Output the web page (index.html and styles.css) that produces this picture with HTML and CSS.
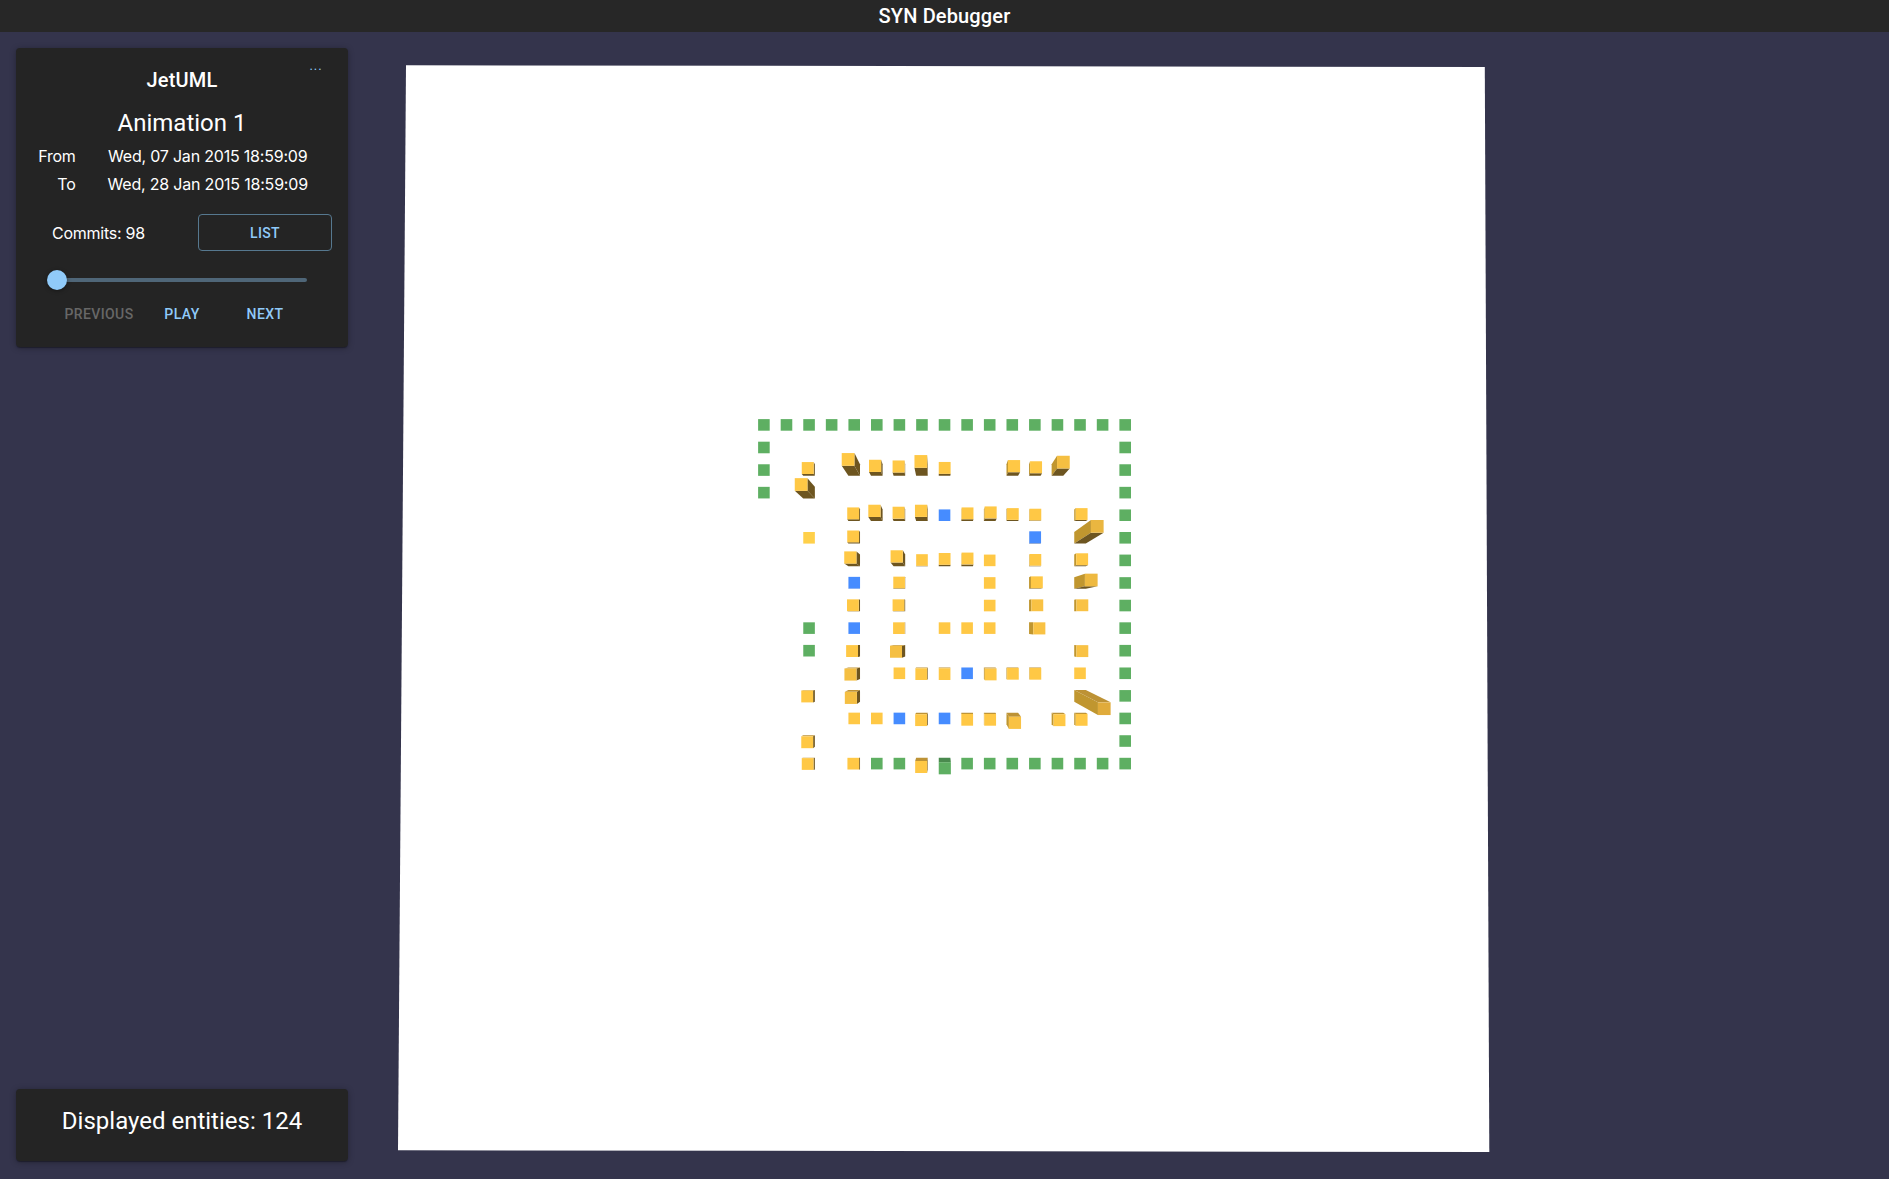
FILE: index.html
```html
<!DOCTYPE html>
<html lang="en">
<head>
<meta charset="utf-8">
<title>SYN Debugger</title>
<link rel="stylesheet" href="styles.css">
</head>
<body>
<header class="app-bar"><h1 class="app-title">SYN Debugger</h1></header>
<main class="viewport">
  <svg class="scene" id="scene" viewBox="0 32 1889 1147" aria-label="Entity map">
    <polygon class="floor" points="406,65.3 1484.8,67 1489.3,1152 398,1150.3"/>
  </svg>
  <aside class="sidebar">
    <section class="card controls">
      <div class="card-head">
        <h2 class="project">JetUML</h2>
        <button class="more" aria-label="More">...</button>
      </div>
      <h3 class="animation">Animation 1</h3>
      <dl class="range">
        <dt>From</dt><dd><span class="date">Wed, 07 Jan 2015 18:59:09</span></dd>
        <dt>To</dt><dd><span class="date">Wed, 28 Jan 2015 18:59:09</span></dd>
      </dl>
      <div class="commits">
        <span class="commit-count">Commits: 98</span>
        <button class="list">LIST</button>
      </div>
      <div class="slider"><span class="thumb"></span></div>
      <div class="playback">
        <button class="text-button" disabled>PREVIOUS</button>
        <button class="text-button">PLAY</button>
        <button class="text-button">NEXT</button>
      </div>
    </section>
    <section class="card summary">Displayed entities: 124</section>
  </aside>
</main>
<script src="scene.js"></script>
</body>
</html>
```
FILE: styles.css
```css
* { box-sizing: border-box; }
body { margin: 0; background: #fff; color: #fff; font-family: Roboto, sans-serif; }
h1, h2, h3, dl, dd { margin: 0; }
button { font-family: inherit; background: none; border: 0; padding: 0; color: #90caf9; }

.app-bar { height: 32px; background: #272727; display: flex; align-items: center; justify-content: center; }
.app-title, .project { font-size: 20px; font-weight: 500; line-height: 32px; letter-spacing: 0.15px; }

.viewport { position: relative; height: 1147px; background: #34344c; overflow: hidden; }
.scene { position: absolute; inset: 0; width: 1889px; height: 1147px; }
.floor { fill: #fff; }

.sidebar { position: relative; width: 364px; height: 100%; padding: 16px 16px 18px; display: flex; flex-direction: column; justify-content: space-between; }
.card {
  background: #242424; border-radius: 4px;
  box-shadow: 0 2px 1px -1px rgba(0,0,0,.2), 0 1px 1px rgba(0,0,0,.14), 0 1px 6px rgba(0,0,0,.3);
}
.controls { height: 299px; padding-top: 10px; }
.card-head { display: grid; grid-template-columns: 64px 1fr 64px; height: 46px; text-align: center; }
.project { grid-column: 2; padding-top: 6px; }
.more { font-size: 13px; line-height: 15px; letter-spacing: 0.9px; height: 15px; width: 64px; }
.animation { height: 38px; font-size: 24px; font-weight: 400; line-height: 38px; text-align: center; }
.range { display: grid; grid-template-columns: 59.5px 1fr; font: 16px/28px Inter, sans-serif; }
.range dt { text-align: right; }
.range dd { text-align: center; padding-right: 8px; }
.range dt, .commit-count { letter-spacing: -0.25px; }
.date { letter-spacing: -0.2px; }
.commits { display: flex; align-items: flex-start; justify-content: space-between; height: 38px; margin-top: 16px; padding: 0 16px 0 36px; font: 16px/38px Inter, sans-serif; }
.list { width: 134px; height: 37px; border: 1px solid #56788f; border-radius: 4px; font: 500 14px/24px Roboto, sans-serif; letter-spacing: 0.4px; }
.slider { width: 250px; height: 4px; margin: 26px 0 0 41px; background: #4f6678; border-radius: 2px; display: flex; align-items: center; }
.thumb { flex: none; width: 20px; height: 20px; margin-left: -10px; border-radius: 50%; background: #90caf9; box-shadow: 0 1px 4px rgba(0,0,0,.4); }
.playback { width: 249px; margin: 20px auto 0; display: grid; grid-template-columns: repeat(3, 1fr); }
.text-button { font-size: 14px; font-weight: 500; line-height: 24px; letter-spacing: 0.4px; }
.text-button:disabled { color: #676767; }
.summary { height: 72px; padding-top: 14px; font-size: 24px; line-height: 36px; text-align: center; }
```
FILE: scene.js
```js
// Each entity: [column, row, kind, lean x, lean y, roof colour]
const entities = [];
for (let c = 0; c <= 16; c++) entities.push([c, 0, 'g']);
for (let r = 1; r <= 3; r++) entities.push([0, r, 'g']);
for (let r = 1; r <= 15; r++) entities.push([16, r, 'g']);
for (let c = 9; c <= 15; c++) entities.push([c, 15, 'g']);
entities.push(
  [2,2,'y',-1.5,-2.2], [4,2,'y',-6.7,-11.2], [5,2,'y',-2,-4.5], [6,2,'y',-1,-3.8], [7,2,'y',-1.7,-9.2],
  [8,2,'y',0,-2.3], [11,2,'y',1.5,-4.2], [12,2,'y',1,-3], [13,2,'y',5.4,-8.5,'#f5bf42'],
  [2,3,'y',-8.5,-8.7],
  [4,4,'y',-1.2,-2], [5,4,'y',-2.7,-4.7], [6,4,'y',-1,-2.7], [7,4,'y',-1.2,-4.7], [8,4,'b'],
  [9,4,'y',.3,-2], [10,4,'y',.8,-3], [11,4,'y',.5,-1.3], [12,4,'y',.5,-.7], [14,4,'y',1.5,-1.3],
  [2,5,'y',0,0,'#ffd04a'], [4,5,'y',-1.2,-1.5], [12,5,'b',.3,-.7], [14,5,'y',16.7,-12,'#eab640'],
  [4,6,'y',-4.2,-3.2], [6,6,'y',-3,-4.3], [7,6,'y',0,-.4], [8,6,'y',0,-1.6], [9,6,'y',.3,-2], [10,6,'y'],
  [12,6,'y',.5,-.6], [14,6,'y',2,-1.3],
  [4,7,'b',0,-.3], [6,7,'y',-.3,-.5], [10,7,'y'], [12,7,'y',1.9,-.8], [14,7,'y',10.7,-3.5,'#eeb940'],
  [4,8,'y',-1.4,-.4], [6,8,'y',-1,-.4], [10,8,'y'], [12,8,'y',2.3,-.4,'#f9c244'], [14,8,'y',2.2,-.4,'#f9c244'],
  [2,9,'g'], [4,9,'b'], [6,9,'y',-.5,0], [8,9,'y'], [9,9,'y'], [10,9,'y'], [12,9,'y',4.2,0,'#f9c244'],
  [2,10,'g'], [4,10,'y',-2.3,.2], [6,10,'y',-3.6,.8,'#f5bf42'], [14,10,'y',2.2,.3,'#f9c244'],
  [4,11,'y',-4,1,'#f5bf42'], [6,11,'y'], [7,11,'y',-.8,.8], [8,11,'y',0,.8], [9,11,'b'], [10,11,'y',.9,1.1],
  [11,11,'y',.6,.5], [12,11,'y',.5,.5], [14,11,'y'],
  [2,12,'y',-2,.5], [4,12,'y',-3.6,1.8,'#f5bf42'], [14,12,'y',23.7,12.3,'#e0ab3b'],
  [4,13,'y'], [5,13,'y'], [6,13,'b'], [7,13,'y',-1,1.6], [8,13,'b'], [9,13,'y',0,1.3], [10,13,'y',.4,1.3],
  [11,13,'y',2.4,4.1,'#f9c244'], [13,13,'y',1.9,1.6], [14,13,'y',1.5,1.3],
  [2,14,'y',-2,1.1],
  [2,15,'y',-1.5,.3], [4,15,'y',-1,0], [5,15,'g'], [6,15,'g'], [7,15,'y',-1,3.2], [8,15,'g',0,4.4]
);

const palette = {
  y: { roof: '#ffc845', lit: '#c0962f', mid: '#bd9235', dark: '#6d5520' },
  g: { roof: '#5eaf62', lit: '#4a8a4e', mid: '#4a8a4e', dark: '#3d7540' },
  b: { roof: '#468cff', lit: '#356bc4', mid: '#356bc4', dark: '#2c5cb0' }
};
const scene = document.getElementById('scene');
function face(points, fill) {
  const p = document.createElementNS('http://www.w3.org/2000/svg', 'polygon');
  p.setAttribute('points', points.map(q => q.join(',')).join(' '));
  p.setAttribute('fill', fill);
  scene.appendChild(p);
}
for (const [c, r, kind, dx = 0, dy = 0, roof] of entities) {
  const x = 758.1 + 22.58 * c, y = 419.1 + 22.58 * r, base = 11.6;
  // Taller entities have roofs closer to the camera, so they look larger
  const size = base + Math.min(1.1, Math.hypot(dx, dy) * 0.12);
  const X = x + base, Y = y + base, u = x + dx, v = y + dy;
  const U = u + size, V = v + size;
  const col = palette[kind];
  if (dx > 0) face([[x, y], [x, Y], [u, V], [u, v]], col.lit);
  if (dx < 0) face([[X, y], [X, Y], [U, V], [U, v]], col.dark);
  if (dy < 0) face([[x, Y], [X, Y], [U, V], [u, V]], col.dark);
  if (dy > 0) face([[x, y], [X, y], [U, v], [u, v]], col.mid);
  face([[u, v], [U, v], [U, V], [u, V]], roof || col.roof);
}
```
